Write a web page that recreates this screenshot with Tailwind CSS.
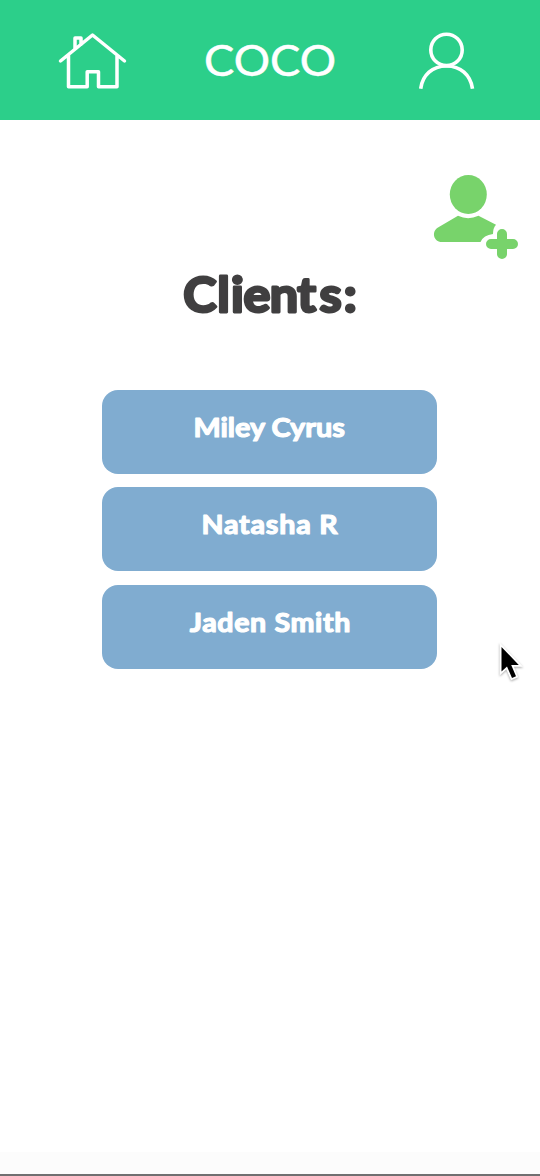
<!DOCTYPE html>
<html lang="en">
<head>
<meta charset="utf-8">
<title>COCO</title>
<script src="https://cdn.jsdelivr.net/npm/@tailwindcss/browser@4"></script>
</head>
<body class="relative flex h-[1176px] w-[540px] flex-col overflow-hidden bg-white font-[Nunito,Lato,sans-serif]">
<header class="flex h-[120px] shrink-0 items-start bg-[#2ccf8a] text-white">
  <svg class="ml-[50px] mt-5 h-20 w-[90px]" viewBox="50 20 90 80" fill="none" stroke="currentColor" stroke-width="3.500" stroke-linecap="round" stroke-linejoin="round">
    <path d="M60.5 61 92.5 35 124.500 61M68.500 55V86.700H87.200V71.700H98.500V86.700H117V55M75 49V38H81V44.500"/>
  </svg>
  <svg class="ml-[50px] mt-[30px] h-[60px] w-[160px]" viewBox="190 30 160 60" fill="currentColor" stroke="currentColor" stroke-width=".5" stroke-linejoin="round">
    <text x="204" y="75.800" font-family="Lato" font-size="42" textLength="132" lengthAdjust="spacingAndGlyphs">COCO</text>
  </svg>
  <svg class="ml-[55px] mt-5 h-20 w-[90px]" viewBox="405 20 90 80" fill="none" stroke="currentColor" stroke-width="3.600">
    <circle cx="446.500" cy="49.900" r="15.700"/><path d="M420.700 88.700C422.500 75 432.500 66 446.500 66S470.500 75 472.500 88.700"/>
  </svg>
</header>
<main class="flex flex-1 flex-col">
  <svg class="ml-[425px] mt-[45px] h-[100px] w-[105px] shrink-0" viewBox="425 165 105 100" fill="#78d36b">
    <ellipse cx="468.300" cy="194.500" rx="18.500" ry="19.500"/>
    <path d="M458 215.800Q468 220.500 478.500 215.800L496 224.800Q493 228 493 234Q483.500 235 480.500 242H442C433 242 431.500 231 438 227.500Z"/>
    <path d="M502 234V254M491 244H513" stroke="#78d36b" stroke-width="10" stroke-linecap="round"/>
  </svg>
  <h1 class="h-[70px] shrink-0">
    <svg class="h-[70px] w-[540px]" viewBox="0 265 540 70" fill="#403f40" stroke="#403f40" stroke-width="2.800" stroke-linejoin="round">
      <text transform="scale(1.06 1)" x="173 205 218 229.800 254.500 280.500 301.300 324.300" y="312" font-family="Lato" font-weight="700" font-size="47.500">Clients:</text>
    </svg>
  </h1>
  <ul class="ml-[102px] mt-[55px] flex w-[335px] flex-col gap-[13px]">
    <li class="h-[84px] rounded-[16px] bg-[#80acd0]">
      <svg class="h-[84px] w-[335px]" viewBox="102 390 335 84" fill="white" stroke="white" stroke-width="1.200" stroke-linejoin="round"><text x="193.500" y="437.300" font-family="Lato" font-weight="700" font-size="27" textLength="151.500" lengthAdjust="spacingAndGlyphs">Miley Cyrus</text></svg>
    </li>
    <li class="h-[84px] rounded-[16px] bg-[#80acd0]">
      <svg class="h-[84px] w-[335px]" viewBox="102 487 335 84" fill="white" stroke="white" stroke-width="1.200" stroke-linejoin="round"><text transform="scale(1.06 1)" x="190.100" y="534.200" font-family="Lato" font-weight="700" font-size="27" textLength="128.400" lengthAdjust="spacing">Natasha R</text></svg>
    </li>
    <li class="mt-px h-[84px] rounded-[16px] bg-[#80acd0]">
      <svg class="h-[84px] w-[335px]" viewBox="102 585 335 84" fill="white" stroke="white" stroke-width="1.200" stroke-linejoin="round"><text transform="scale(1.06 1)" x="179" y="631.800" font-family="Lato" font-weight="700" font-size="27" textLength="151.500" lengthAdjust="spacing">Jaden Smith</text></svg>
    </li>
  </ul>
</main>
<footer class="h-6 shrink-0 border-b-2 border-[#706f70] bg-[#fcfcfc]"></footer>
<svg class="absolute left-[490px] top-[635px] h-[50px] w-[45px] drop-shadow-[0_1px_1px_rgba(0,0,0,0.35)]" viewBox="490 635 45 50">
  <path d="M501.500 647V671.500L507 666.500L512 678L516 676.300L511.200 665H518.800Z" fill="black" stroke="white" stroke-width="3.600" paint-order="stroke"/>
</svg>
</body>
</html>
